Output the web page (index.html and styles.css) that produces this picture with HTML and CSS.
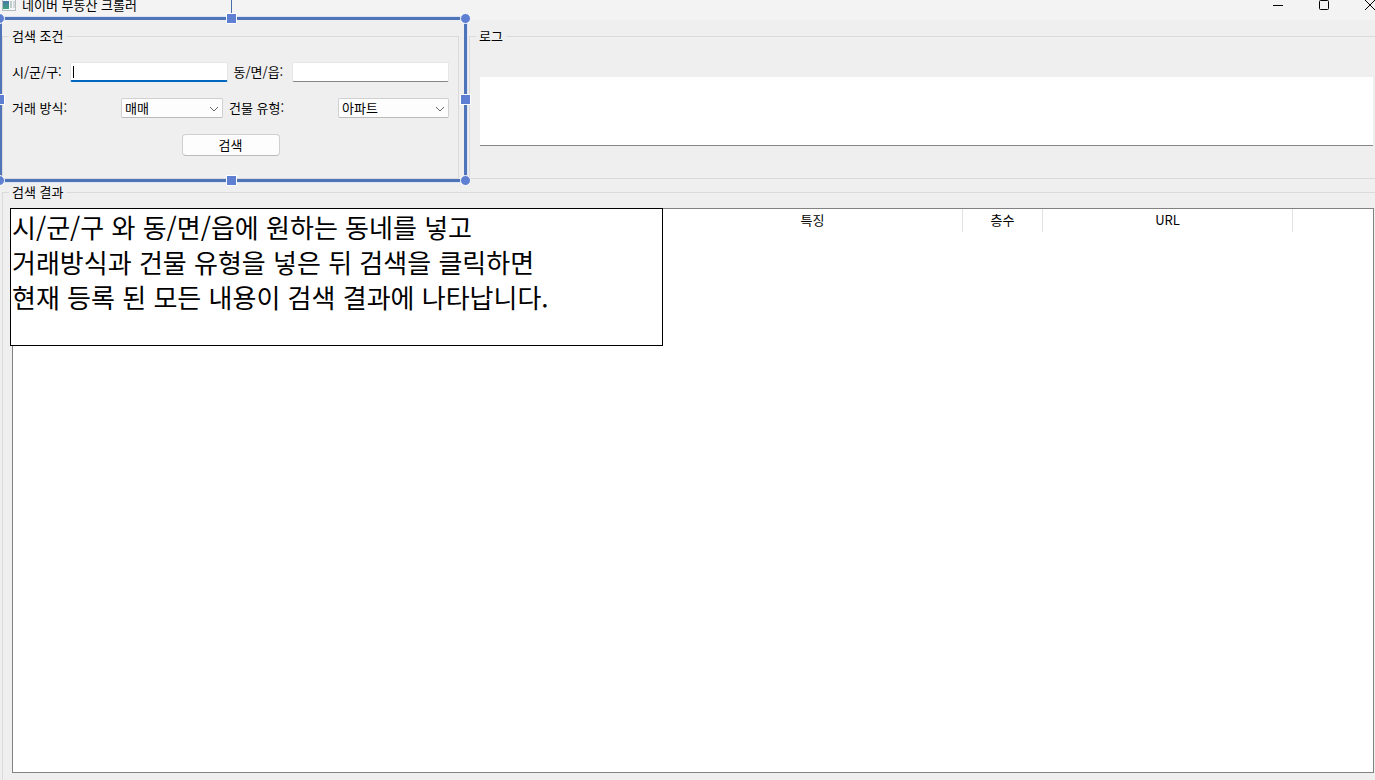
FILE: index.html
```html
<!DOCTYPE html>
<html lang="ko">
<head>
<meta charset="utf-8">
<meta name="viewport" content="width=device-width, initial-scale=1">
<title>네이버 부동산 크롤러</title>
<link rel="stylesheet" href="styles.css">
</head>
<body>
<div class="window">
  <header class="titlebar">
    <svg class="app-icon" width="14" height="12" viewBox="0 0 14 12" aria-hidden="true">
      <defs>
        <linearGradient id="pane" x1="0" y1="0" x2="0" y2="1">
          <stop offset="0" stop-color="#4a78a8"/>
          <stop offset="1" stop-color="#3fa37c"/>
        </linearGradient>
      </defs>
      <rect x="0.5" y="-0.5" width="13" height="11" fill="#f4f7f7" stroke="#b4bcbe"/>
      <rect x="1" y="1" width="6" height="8" fill="url(#pane)"/>
      <rect x="8" y="1" width="2" height="7" fill="#c3cccd"/>
      <rect x="11" y="1" width="2" height="7" fill="#d5dbdc"/>
    </svg>
    <h1 class="title">네이버 부동산 크롤러</h1>
    <div class="window-buttons">
      <button type="button" class="window-button" aria-label="최소화">
        <svg width="10" height="10" viewBox="0 0 10 10"><path d="M0 5.5H10" stroke="#000"/></svg>
      </button>
      <button type="button" class="window-button" aria-label="최대화">
        <svg width="10" height="10" viewBox="0 0 10 10"><rect x="0.5" y="0.5" width="9" height="9" rx="1" fill="none" stroke="#000"/></svg>
      </button>
      <button type="button" class="window-button" aria-label="닫기">
        <svg width="10" height="10" viewBox="0 0 10 10"><path d="M0 0L10 10M10 0L0 10" stroke="#000"/></svg>
      </button>
    </div>
  </header>

  <main class="content">
    <div class="top">
      <div class="search">
        <fieldset class="group">
          <legend>검색 조건</legend>
          <form class="form">
            <div class="row">
              <label class="area-label" for="city">시/군/구:</label>
              <input class="field field-active" id="city" type="text">
              <label class="area-label" for="town">동/면/읍:</label>
              <input class="field" id="town" type="text">
            </div>
            <div class="row">
              <label class="kind-label" for="deal">거래 방식:</label>
              <div class="picker picker-deal">
                <select id="deal"><option>매매</option></select>
                <svg class="chevron" width="10" height="6" viewBox="0 0 10 6"><path d="M1 1L5 5L9 1" fill="none" stroke="#666"/></svg>
              </div>
              <label class="kind-label" for="building">건물 유형:</label>
              <div class="picker picker-building">
                <select id="building"><option>아파트</option></select>
                <svg class="chevron" width="10" height="6" viewBox="0 0 10 6"><path d="M1 1L5 5L9 1" fill="none" stroke="#666"/></svg>
              </div>
            </div>
            <button type="button" class="submit">검색</button>
          </form>
        </fieldset>
        <svg class="stem" width="1" height="14" viewBox="0 0 1 14" aria-hidden="true"><rect width="1" height="14" fill="#4a6cab"/></svg>
        <div class="selection">
          <span class="handle round n w"></span>
          <span class="handle n center"></span>
          <span class="handle round n e"></span>
          <span class="handle middle w"></span>
          <span class="handle middle e"></span>
          <span class="handle round s w"></span>
          <span class="handle s center"></span>
          <span class="handle round s e"></span>
        </div>
      </div>
      <fieldset class="group log-group">
        <legend>로그</legend>
        <textarea class="log" aria-label="로그" readonly></textarea>
      </fieldset>
    </div>

    <fieldset class="group results">
      <legend>검색 결과</legend>
      <div class="table-box">
        <table class="table">
          <colgroup>
            <col class="col-hidden"><col class="col-feature"><col class="col-floor"><col class="col-url"><col>
          </colgroup>
          <thead>
            <tr><td></td><th scope="col">특징</th><th scope="col">층수</th><th scope="col">URL</th><td></td></tr>
          </thead>
        </table>
        <p class="note">시/군/구 와 동/면/읍에 원하는 동네를 넣고<br>거래방식과 건물 유형을 넣은 뒤 검색을 클릭하면<br>현재 등록 된 모든 내용이 검색 결과에 나타납니다.</p>
      </div>
    </fieldset>
  </main>
</div>
</body>
</html>
```
FILE: styles.css
```css
* {
  box-sizing: border-box;
}

body {
  margin: 0;
  background: #efefef;
  color: #000;
  font: 13px/20px "Noto Sans CJK KR", sans-serif;
}

button,
input,
select,
textarea {
  font: inherit;
  color: inherit;
}

.window {
  display: flex;
  flex-direction: column;
  height: 100vh;
  overflow: hidden;
}

/* Title bar */
.titlebar {
  display: flex;
  align-items: flex-start;
  gap: 6px;
  height: 20px;
  padding-left: 2px;
  background: #f3f3f3;
}

.app-icon {
  flex: none;
}

.title {
  flex: 1;
  margin: 0;
  font-size: 13px;
  font-weight: 400;
  line-height: 10px;
}

.window-buttons {
  display: flex;
  gap: 36px;
}

.window-button {
  display: block;
  padding: 0;
  border: 0;
  background: none;
  line-height: 0;
}

/* Group boxes */
.content {
  display: flex;
  flex: 1;
  flex-direction: column;
  gap: 3px;
  min-height: 0;
  padding: 6px 0 0 2px;
}

.top {
  display: grid;
  grid-template-columns: 457px 1fr;
  gap: 10px;
}

.group {
  min-width: 0;
  margin: 0;
  padding: 0 9px;
  border: 1px solid #dadada;
}

.group legend {
  margin-left: -3px;
  padding: 0 3px;
}

.search {
  position: relative;
}

/* Search form */
.form {
  display: flex;
  flex-direction: column;
  gap: 16px;
  padding: 16px 0 22px;
}

.row {
  display: flex;
  align-items: center;
  gap: 6px;
}

.area-label {
  flex: 0 0 52px;
  line-height: 18px;
  white-space: nowrap;
}

.kind-label {
  flex: 0 0 103px;
  line-height: 18px;
}

.field {
  flex: 1;
  min-width: 0;
  height: 20px;
  padding: 0 4px;
  border: 1px solid #e6e6e6;
  border-bottom-color: #868686;
  border-radius: 2px;
  background: #fff;
  outline: 0;
}

.field-active {
  border-bottom: 2px solid #0067c0;
  background: linear-gradient(#000, #000) 2px 3px / 1px 12px no-repeat #fff;
}

.picker {
  position: relative;
}

.picker-deal {
  flex: 0 0 102px;
}

.picker-building {
  flex: 1;
}

.picker select {
  display: block;
  width: 100%;
  height: 20px;
  padding: 0 3px 1px;
  border: 1px solid #d0d0d0;
  border-bottom-color: #bbb;
  border-radius: 2px;
  background: #fdfdfd;
  line-height: 17px;
  appearance: none;
}

.chevron {
  position: absolute;
  top: 8px;
  right: 4px;
  pointer-events: none;
}

.submit {
  align-self: center;
  width: 98px;
  height: 22px;
  padding: 0;
  border: 1px solid #d0d0d0;
  border-bottom-color: #bbb;
  border-radius: 4px;
  background: #fdfdfd;
  line-height: 20px;
}

/* Selection frame drawn over the search box */
.selection {
  position: absolute;
  inset: -9px -8px -3px -2px;
  border: 3px solid #4f74b8;
  border-left-width: 2px;
  outline: 1px solid #dbe5f5;
  pointer-events: none;
}

.stem {
  position: absolute;
  bottom: 100%;
  left: 229px;
  margin-bottom: 12px;
}

.handle {
  position: absolute;
  width: 11px;
  height: 11px;
  border: 1px solid #fff;
  background: #5f80d2;
}

.round {
  border-radius: 50%;
}

.n {
  top: -7px;
}

.s {
  bottom: -7px;
}

.w {
  left: -8px;
}

.e {
  right: -7px;
}

.center {
  left: calc(50% - 7px);
}

.middle {
  top: calc(50% - 6px);
}

/* Log */
.log-group {
  padding: 0 2px 0 10px;
  border-right: 0;
}

.log-group legend {
  margin-left: -4px;
}

.log {
  display: block;
  width: 100%;
  height: 69px;
  margin-top: 31px;
  padding: 4px;
  border: 0;
  border-bottom: 1px solid #868686;
  background: #fff;
  outline: 0;
  resize: none;
}

/* Results */
.results {
  flex: 1;
  min-height: 0;
  padding: 6px 1px 7px 9px;
  border-right: 0;
  border-bottom: 0;
}

.table-box {
  position: relative;
  height: 100%;
  border: 1px solid #828282;
  background: #fff;
}

.table {
  width: 100%;
  border-collapse: separate;
  border-spacing: 0;
  table-layout: fixed;
}

.col-hidden {
  width: 650px;
}

.col-feature {
  width: 300px;
}

.col-floor {
  width: 80px;
}

.col-url {
  width: 250px;
}

.table th {
  height: 23px;
  padding: 0 0 2px;
  border-right: 1px solid #e2e2e2;
  font-weight: 400;
  line-height: 21px;
}

.note {
  position: absolute;
  top: -1px;
  left: -3px;
  width: 653px;
  height: 138px;
  margin: 0;
  padding: 0 1px;
  border: 1px solid #000;
  background: #fff;
  font-size: 26px;
  line-height: 35px;
}
```
